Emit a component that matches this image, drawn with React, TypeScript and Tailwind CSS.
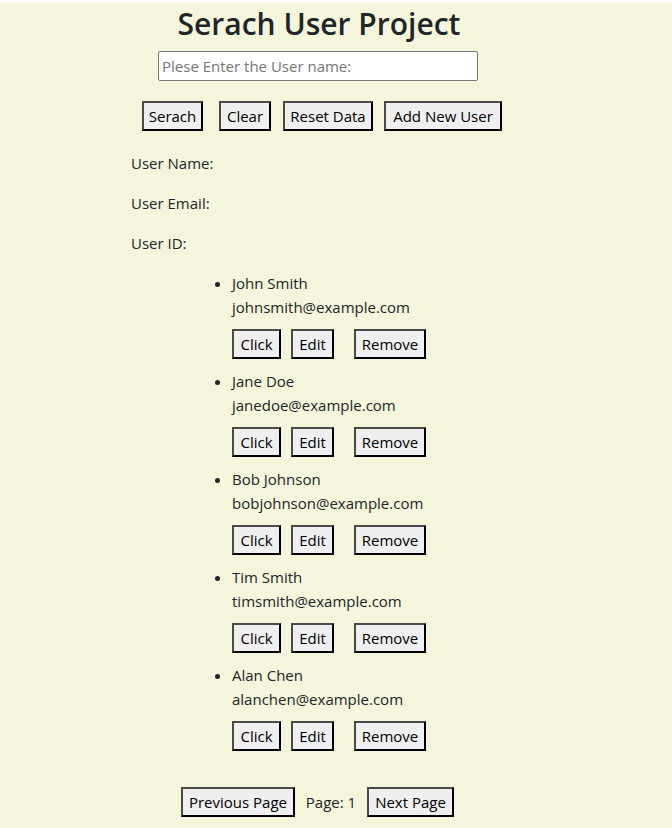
import React from "react";

const users = [
  { name: "John Smith", email: "johnsmith@example.com" },
  { name: "Jane Doe", email: "janedoe@example.com" },
  { name: "Bob Johnson", email: "bobjohnson@example.com" },
  { name: "Tim Smith", email: "timsmith@example.com" },
  { name: "Alan Chen", email: "alanchen@example.com" },
];

const btn =
  "h-[30px] bg-[#efefef] text-black border-2 border-t-[#4a4a4a] border-l-[#4a4a4a] border-r-black border-b-black text-center text-[15px] leading-none";

const App = () => {
  return (
    <div
      className="bg-white pt-[3px] text-[#212529]"
      style={{ fontFamily: "'Open Sans', 'Noto Sans', sans-serif" }}
    >
      <div className="bg-[#f5f5dc] min-h-[825px] w-full">
        <div className="w-[638px] pt-px">
          <h1 className="text-center text-[30px] leading-[40px] font-semibold">Serach User Project</h1>

          <div className="flex pl-[158px] mt-[7px]">
            <input
              type="text"
              placeholder="Plese Enter the User name:"
              className="w-[320px] h-[30px] bg-white border border-[#767676] rounded-[2px] px-[3px] text-[15px] placeholder:text-[#757575] outline-none"
            />
          </div>

          <div className="flex pl-[142px] mt-[20px]">
            <button className={btn + " w-[61px]"}>Serach</button>
            <button className={btn + " w-[52px] ml-[16px]"}>Clear</button>
            <button className={btn + " w-[90px] ml-[12px]"}>Reset Data</button>
            <button className={btn + " w-[118px] ml-[11px]"}>Add New User</button>
          </div>

          <div className="pl-[131px] text-[15px] leading-[24px] mt-[20px]">
            <p>User Name:</p>
            <p className="mt-[16px]">User Email:</p>
            <p className="mt-[16px]">User ID:</p>
          </div>

          <ul className="list-disc pl-[232px] mt-[16px] text-[15px] leading-[24px]">
            {users.map((u) => (
              <li key={u.email} className="pb-[10px]">
                <div>{u.name}</div>
                <div>{u.email}</div>
                <div className="flex mt-[10px]">
                  <button className={btn + " w-[49px]"}>Click</button>
                  <button className={btn + " w-[43px] ml-[10px]"}>Edit</button>
                  <button className={btn + " w-[72px] ml-[20px]"}>Remove</button>
                </div>
              </li>
            ))}
          </ul>

          <div className="flex items-center mt-[26px] pl-[181px] text-[15px]">
            <button className={btn + " w-[114px]"}>Previous Page</button>
            <span className="w-[72px] text-center">Page: 1</span>
            <button className={btn + " w-[87px]"}>Next Page</button>
          </div>
        </div>
      </div>
    </div>
  );
};

export default App;
